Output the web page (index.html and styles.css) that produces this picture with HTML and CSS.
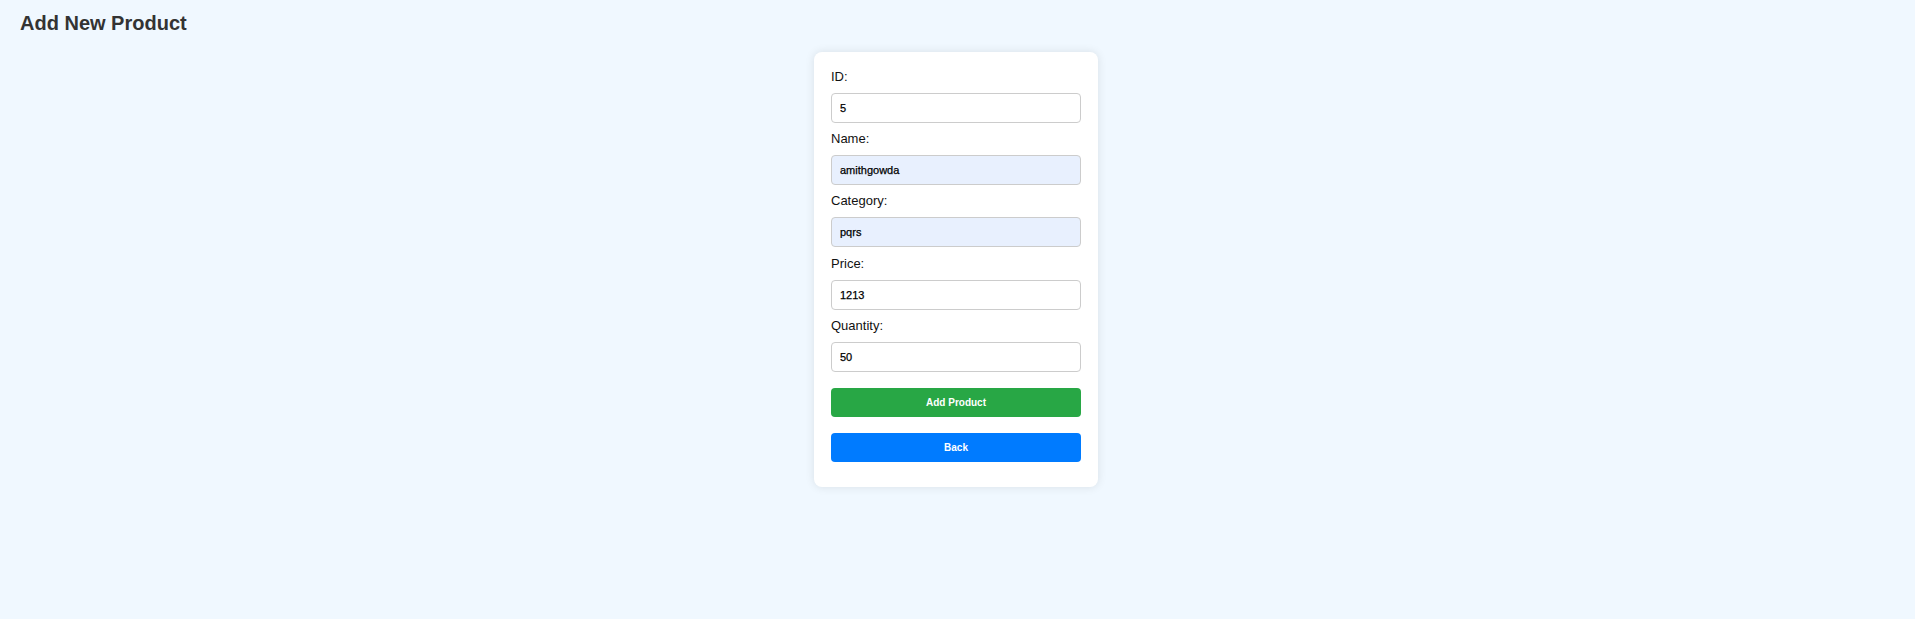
FILE: index.html
```html
<!DOCTYPE html>
<html lang="en">
<head>
<meta charset="utf-8">
<title>Add New Product</title>
<link rel="stylesheet" href="styles.css">
</head>
<body>
  <h1 class="page-title">Add New Product</h1>
  <form class="card">
    <label class="field-label" for="id">ID:</label>
    <input class="field-input" id="id" type="text" value="5">
    <label class="field-label" for="name">Name:</label>
    <input class="field-input autofilled" id="name" type="text" value="amithgowda">
    <label class="field-label" for="category">Category:</label>
    <input class="field-input autofilled" id="category" type="text" value="pqrs">
    <label class="field-label" for="price">Price:</label>
    <input class="field-input" id="price" type="text" value="1213">
    <label class="field-label" for="quantity">Quantity:</label>
    <input class="field-input" id="quantity" type="text" value="50">
    <button class="btn btn-add" type="button">Add Product</button>
    <button class="btn btn-back" type="button">Back</button>
  </form>
</body>
</html>
```

FILE: styles.css
```css
html, body {
  margin: 0;
}

body {
  background: #f0f8ff;
  font-family: "Liberation Sans", Arial, sans-serif;
  padding: 12px 23px 0 20px;
  min-height: 619px;
  box-sizing: border-box;
}

.page-title {
  margin: 0 0 17px 0;
  font-size: 20px;
  line-height: 23px;
  font-weight: bold;
  color: #333;
}

.card {
  width: 250px;
  margin: 0 auto;
  padding: 17px;
  background: #fff;
  border-radius: 8px;
  box-shadow: 0 0 10px rgba(0, 0, 0, 0.1);
  display: flex;
  flex-direction: column;
}

.field-label {
  display: block;
  font-size: 13px;
  line-height: 15px;
  color: #111;
  margin-bottom: 9px;
}

.field-input {
  display: block;
  box-sizing: border-box;
  width: 100%;
  height: 30px;
  margin: 0 0 8.2px 0;
  padding: 0 8px;
  border: 1px solid #ccc;
  border-radius: 4px;
  background: #fff;
  font-family: "Liberation Sans", Arial, sans-serif;
  font-size: 11px;
  color: #000;
  -webkit-text-stroke: 0.25px #000;
  outline: none;
}

.field-input.autofilled {
  background: #e8f0fe;
}

.btn {
  display: block;
  width: 100%;
  height: 29px;
  margin: 8px 0;
  padding: 0;
  border: none;
  border-radius: 4px;
  color: #fff;
  font-family: "Liberation Sans", Arial, sans-serif;
  font-size: 10px;
  font-weight: bold;
  cursor: pointer;
}

.btn-add {
  background: #28a745;
}

.btn-back {
  background: #007bff;
}
```
